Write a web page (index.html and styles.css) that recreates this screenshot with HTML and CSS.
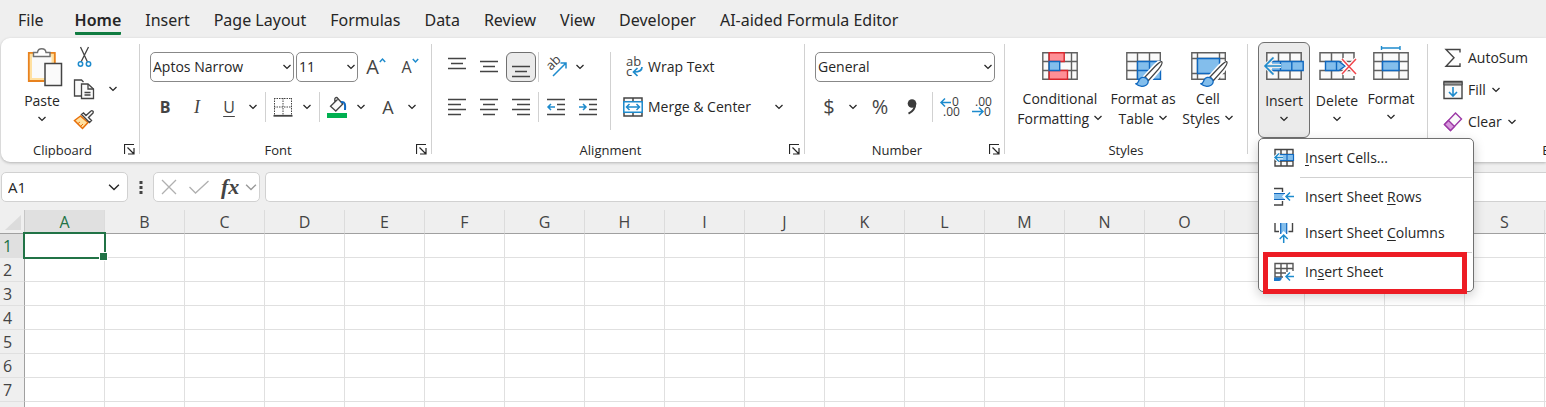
FILE: index.html
```html
<!DOCTYPE html>
<html lang="en">
<head>
  <meta charset="UTF-8" />
  <meta name="viewport" content="width=device-width, initial-scale=1" />
  <title>Excel - Insert Sheet</title>
  <link rel="stylesheet" href="styles.css">
</head>
<body>
  <!-- Shared icons -->
  <svg class="defs" width="0" height="0">
    <symbol id="chevron" viewBox="0 0 10 6"><path d="M1.500 1l3.500 3.400L8.500 1" fill="none" stroke="currentColor" /></symbol>
    <symbol id="launcher" viewBox="0 0 11 11"><path d="M10 .5H.5V10M3.500 3.500l6 6M10 4v6H4" fill="none" stroke="currentColor" stroke-width="1.200" /></symbol>
    <symbol id="brush" viewBox="0 0 28 26">
      <path d="M26.500 1c1 1-.5 4.500-3 8L14 20l-4-4L20 5c3-3 5.500-5 6.500-4z" fill="#fff" stroke="#fff" stroke-width="4" />
      <path d="M26.800 .8c.8 1-.7 4-3.300 7.400L13.500 19.500 10 16 20 5.500c3.500-3.400 6-5.500 6.800-4.700z" fill="#fff" stroke="#444" stroke-width="1.300" />
      <path d="M.8 22.800c2.500 0 2.400-2 3.300-3.800 1.300-2.600 4.500-3.600 7.300-1.600 2.600 2 2.300 5.300-.4 6.800-3.200 1.700-7.400 1-10.200-1.400z" fill="#83beec" stroke="#1068bf" stroke-width="1.300" />
    </symbol>
  </svg>

  <nav class="tabs">
    <button class="file">File</button>
    <button class="active">Home</button>
    <button>Insert</button>
    <button>Page Layout</button>
    <button>Formulas</button>
    <button>Data</button>
    <button>Review</button>
    <button>View</button>
    <button>Developer</button>
    <button>AI-aided Formula Editor</button>
  </nav>

  <div class="ribbon">
    <section class="group clipboard">
      <div class="body">
        <button class="big split">
          <svg width="40" height="40" viewBox="0 0 40 40">
            <path d="M8 8.500h23.500V34H8z" fill="#fafafa" stroke="#ffe0a0" stroke-width="4" />
            <path d="M22 35H6.800V6.800h26V17" fill="none" stroke="#e8821e" stroke-width="1.800" />
            <path d="M11.500 10.500V6.500h4c.5-5 8-5 8.500 0h4v4z" fill="#fff" stroke="#707070" stroke-width="1.400" />
            <path d="M23 17.500h16.500v22H23z" fill="#fafafa" stroke="#444" stroke-width="1.500" />
          </svg>
          <span class="label">Paste</span>
          <svg class="chevron"><use href="#chevron" /></svg>
        </button>
        <div class="stack narrow">
          <button class="tool" aria-label="Cut">
            <svg width="20" height="22" viewBox="0 0 20 22">
              <path d="M6.500 1l7 15M14.500 1L7 16" fill="none" stroke="#444" stroke-width="1.300" />
              <g fill="none" stroke="#1e8bcd" stroke-width="1.500"><circle cx="6.500" cy="18" r="2.200" /><circle cx="14.500" cy="18" r="2.200" /></g>
            </svg>
          </button>
          <div class="pair">
            <button class="tool" aria-label="Copy">
              <svg width="22" height="22" viewBox="0 0 22 22" fill="#fafafa" stroke="#444" stroke-width="1.300">
                <path d="M8 18H1.500V2h7l2 2" /><path d="M8.500 6H15l5.500 5v9.500h-12z" /><path d="M15 6v5h5.500M11.500 14.500h6M11.500 17h6" fill="none" />
              </svg>
            </button>
            <button class="chev" aria-label="Copy options"><svg class="chevron"><use href="#chevron" /></svg></button>
          </div>
          <button class="tool" aria-label="Format Painter">
            <svg width="22" height="20" viewBox="0 0 22 20">
              <path d="M7.500 6L1.500 10.500l8 8 5.500-6z" fill="#ffe0a0" stroke="#e8700a" stroke-width="1.500" />
              <path d="M5 13.500l2-1.500M8 16l2-2" stroke="#e8700a" fill="none" />
              <path d="M8.500 4.500l8 8 2-2-3-3 4.500-4.500c1-1.500-1-3-2-2L13 5.500l-2.500-2.500z" fill="#fff" stroke="#444" stroke-width="1.400" />
            </svg>
          </button>
        </div>
      </div>
      <footer><span>Clipboard</span><button aria-label="Clipboard settings"><svg class="launcher"><use href="#launcher" /></svg></button></footer>
    </section>
    <div class="divider"></div>

    <section class="group font">
      <div class="body rows">
        <div class="row combos">
          <label class="combo wide"><select aria-label="Font name"><option>Aptos Narrow</option></select><svg class="chevron"><use href="#chevron" /></svg></label>
          <label class="combo size"><select aria-label="Font size"><option>11</option></select><svg class="chevron"><use href="#chevron" /></svg></label>
          <button class="tool letter grow" aria-label="Increase font size">A<svg width="7" height="5" viewBox="0 0 7 5"><path d="M.8 4l2.700-3 2.700 3" fill="none" stroke="#1e8bcd" stroke-width="1.500" /></svg></button>
          <button class="tool letter shrink" aria-label="Decrease font size">A<svg width="7" height="5" viewBox="0 0 7 5"><path d="M.8 1l2.700 3 2.700-3" fill="none" stroke="#1e8bcd" stroke-width="1.500" /></svg></button>
        </div>
        <div class="row">
          <button class="tool bold">B</button>
          <button class="tool italic">I</button>
          <button class="tool underline">U</button>
          <button class="chev" aria-label="Underline options"><svg class="chevron"><use href="#chevron" /></svg></button>
          <div class="sep"></div>
          <button class="tool" aria-label="Borders">
            <svg width="20" height="20" viewBox="0 0 20 20" fill="none" stroke="#444">
              <path d="M1 1.500h18M1 10h18M1.500 1v17M10 1v17M18.500 1v17" stroke-dasharray="1.500 1" /><path d="M.5 18.800h19" stroke-width="1.800" />
            </svg>
          </button>
          <button class="chev" aria-label="Border options"><svg class="chevron"><use href="#chevron" /></svg></button>
          <div class="sep"></div>
          <button class="tool" aria-label="Fill color">
            <svg width="20" height="22" viewBox="0 0 20 22">
              <path d="M10.500 3.500L3.500 10.300l5.300 4.700 7-7-5-5.500c-1-1.800-3.300-.8-3 1V7" fill="#fafafa" stroke="#444" stroke-width="1.300" />
              <path d="M14 6c4-.5 4.500 2 4 8" fill="none" stroke="#1068bf" stroke-width="2" />
              <path d="M0 17h20v5H0z" fill="#00b050" />
            </svg>
          </button>
          <button class="chev" aria-label="Fill color options"><svg class="chevron"><use href="#chevron" /></svg></button>
          <button class="tool letter spaced" aria-label="Font color">A</button>
          <button class="chev" aria-label="Font color options"><svg class="chevron"><use href="#chevron" /></svg></button>
        </div>
      </div>
      <footer><span>Font</span><button aria-label="Font settings"><svg class="launcher"><use href="#launcher" /></svg></button></footer>
    </section>
    <div class="divider"></div>

    <section class="group alignment">
      <div class="body rows">
        <div class="columns">
          <div class="rows">
            <div class="row">
              <button class="tool" aria-label="Top align"><svg class="lines" viewBox="0 0 18 20"><path d="M0 1.500h18M3 6.500h12M0 11.500h18" /></svg></button>
              <button class="tool" aria-label="Middle align"><svg class="lines" viewBox="0 0 18 20"><path d="M0 4.500h18M3 9.500h12M0 14.500h18" /></svg></button>
              <button class="tool pressed" aria-label="Bottom align"><svg class="lines" viewBox="0 0 18 20"><path d="M0 9.500h18M3 14.500h12M0 19.500h18" /></svg></button>
              <div class="sep tight"></div>
              <button class="tool" aria-label="Orientation">
                <svg width="22" height="22" viewBox="0 0 22 22">
                  <text transform="translate(6 15) rotate(-45)" font-size="13" fill="#444">ab</text>
                  <path d="M8 20L20.500 7.500M15.500 7h5.500v5.500" fill="none" stroke="#1e8bcd" stroke-width="1.500" />
                </svg>
              </button>
              <button class="chev" aria-label="Orientation options"><svg class="chevron"><use href="#chevron" /></svg></button>
            </div>
            <div class="row">
              <button class="tool" aria-label="Align left"><svg class="lines" viewBox="0 0 18 20"><path d="M0 2.500h18M0 7.500h13M0 12.500h18M0 17.500h13" /></svg></button>
              <button class="tool" aria-label="Center"><svg class="lines" viewBox="0 0 18 20"><path d="M0 2.500h18M3 7.500h12M0 12.500h18M3 17.500h12" /></svg></button>
              <button class="tool" aria-label="Align right"><svg class="lines" viewBox="0 0 18 20"><path d="M0 2.500h18M5 7.500h13M0 12.500h18M5 17.500h13" /></svg></button>
              <div class="sep tight"></div>
              <button class="tool" aria-label="Decrease indent"><svg class="lines" viewBox="0 0 18 20"><path d="M0 2.500h18M10 7.500h8M10 12.500h8M0 17.500h18" /><path class="blue" d="M8 10H1M4 7l-3 3 3 3" /></svg></button>
              <button class="tool" aria-label="Increase indent"><svg class="lines" viewBox="0 0 18 20"><path d="M0 2.500h18M10 7.500h8M10 12.500h8M0 17.500h18" /><path class="blue" d="M0 10h7M4 7l3 3-3 3" /></svg></button>
            </div>
          </div>
          <div class="sep tall"></div>
          <div class="rows">
            <button class="text-tool">
              <svg width="20" height="22" viewBox="0 0 20 22">
                <text x="3" y="10" font-size="13" fill="#444">ab</text><text x="3" y="20" font-size="13" fill="#444">c</text>
                <path d="M19 11c0 4-3 5-8 5M14.500 12l-4 4 4 4" fill="none" stroke="#1e8bcd" stroke-width="1.700" />
              </svg>
              Wrap Text
            </button>
            <div class="row">
              <button class="text-tool merge">
                <svg width="20" height="20" viewBox="0 0 20 20">
                  <path d="M1 1h18v18H1zM10 1v18" fill="#fafafa" stroke="#444" stroke-width="1.500" />
                  <path d="M.8 4.800h18.400v10.400H.8z" fill="#fff" stroke="#1e8bcd" stroke-width="1.500" />
                  <path d="M3.500 10h13M6.500 7l-3 3 3 3M13.500 7l3 3-3 3" fill="none" stroke="#1e8bcd" stroke-width="1.500" />
                </svg>
                Merge &amp; Center
              </button>
              <button class="chev" aria-label="Merge options"><svg class="chevron"><use href="#chevron" /></svg></button>
            </div>
          </div>
        </div>
      </div>
      <footer><span>Alignment</span><button aria-label="Alignment settings"><svg class="launcher"><use href="#launcher" /></svg></button></footer>
    </section>
    <div class="divider"></div>

    <section class="group number">
      <div class="body rows">
        <div class="row combos">
          <label class="combo format"><select aria-label="Number format"><option>General</option></select><svg class="chevron"><use href="#chevron" /></svg></label>
        </div>
        <div class="row">
          <button class="tool currency">$</button>
          <button class="chev" aria-label="Currency options"><svg class="chevron"><use href="#chevron" /></svg></button>
          <button class="tool percent spaced">%</button>
          <button class="tool" aria-label="Comma style">
            <svg width="12" height="16" viewBox="0 0 12 16"><circle cx="6" cy="4.500" r="4.300" fill="#3b3b3b" /><path d="M9.300 4.500c0 5-2.500 8-6.800 10.200" fill="none" stroke="#3b3b3b" stroke-width="2" /></svg>
          </button>
          <div class="sep"></div>
          <button class="tool" aria-label="Increase decimal">
            <svg width="20" height="22" viewBox="0 0 20 22" font-size="12" fill="#3b3b3b">
              <text x="12" y="10">0</text><text x="3" y="20">.00</text>
              <path d="M11 6.500H1M5 2.500l-4 4 4 4" fill="none" stroke="#1e8bcd" stroke-width="1.500" />
            </svg>
          </button>
          <button class="tool" aria-label="Decrease decimal">
            <svg width="20" height="22" viewBox="0 0 20 22" font-size="12" fill="#3b3b3b">
              <text x="3" y="10">.00</text><text x="12" y="20">0</text>
              <path d="M0 15.500h11M7 11.500l4 4-4 4" fill="none" stroke="#1e8bcd" stroke-width="1.500" />
            </svg>
          </button>
        </div>
      </div>
      <footer><span>Number</span><button aria-label="Number settings"><svg class="launcher"><use href="#launcher" /></svg></button></footer>
    </section>
    <div class="divider"></div>

    <section class="group styles">
      <div class="body">
        <button class="big w-cond">
          <svg width="40" height="40" viewBox="0 0 40 40">
            <path d="M2.800 6.800h34.400v26.400H2.800zM2.800 15.500h34.400M2.800 24.500h34.400M9 6.800v26.400M31.500 6.800v26.400" fill="#fafafa" stroke="#606060" stroke-width="1.400" />
            <path d="M9.200 6.800h15v8.700h-15zM9.200 24.500H27.500v8.700H9.200z" fill="#ff8f96" stroke="#d8272d" stroke-width="1.400" />
            <path d="M9.200 15.500h10.500v9H9.200z" fill="#83beec" stroke="#1068bf" stroke-width="1.400" />
          </svg>
          <span class="label">Conditional<br>Formatting <svg class="chevron"><use href="#chevron" /></svg></span>
        </button>
        <button class="big w-table">
          <svg width="40" height="42" viewBox="0 0 40 42">
            <path d="M3.800 6.800h33.500v26.400H3.800zM3.800 15.500h33.500M3.800 24.500h33.500M14.500 6.800v26.400M26.500 6.800v26.400" fill="#fafafa" stroke="#606060" stroke-width="1.400" />
            <path d="M14.500 15.500h23v17.700h-23zM14.500 24.500h23M26.500 15.500v17.700" fill="#83beec" stroke="#1068bf" stroke-width="1.400" />
            <use href="#brush" x="12" y="15" width="28" height="26" />
          </svg>
          <span class="label">Format as<br>Table <svg class="chevron"><use href="#chevron" /></svg></span>
        </button>
        <button class="big w-cell">
          <svg width="40" height="42" viewBox="0 0 40 42">
            <path d="M3.800 6.800h33.500v26.400H3.800zM3.800 12.500h33.500M3.800 27.500h33.500M9.500 6.800v26.400M31.500 6.800v26.400" fill="#fafafa" stroke="#606060" stroke-width="1.400" />
            <path d="M9.500 12.500h22v15h-22z" fill="#83beec" stroke="#1068bf" stroke-width="1.400" />
            <use href="#brush" x="12" y="15" width="28" height="26" />
          </svg>
          <span class="label">Cell<br>Styles <svg class="chevron"><use href="#chevron" /></svg></span>
        </button>
      </div>
      <footer class="plain"><span>Styles</span></footer>
    </section>
    <div class="divider"></div>

    <section class="group cells">
      <div class="body">
        <div class="dropdown">
          <button class="big split pressed" aria-expanded="true">
            <svg width="40" height="40" viewBox="0 0 40 40">
              <path d="M2.800 6.800h34.400v26.400H2.800zM2.800 15.500h34.400M2.800 24.500h34.400M14.500 6.800v26.400M26 6.800v26.400" fill="#fafafa" stroke="#606060" stroke-width="1.500" />
              <path d="M8 15.500h31.200v9H8M16.500 15.500v9M27.800 15.500v9" fill="#83beec" stroke="#1068bf" stroke-width="1.400" />
              <path d="M17 20H1.500M9.500 11.500L1 20l8.500 8.500" fill="none" stroke="#ebebeb" stroke-width="4" />
              <path d="M17 20H1.500M9.500 11.500L1 20l8.500 8.500" fill="none" stroke="#1e8bcd" stroke-width="1.600" />
            </svg>
            <span class="label">Insert</span>
            <svg class="chevron"><use href="#chevron" /></svg>
          </button>
          <div class="menu" role="menu">
            <button role="menuitem">
              <svg width="20" height="20" viewBox="0 0 20 20">
                <path d="M1 1.500h18v16.500H1zM1 6.500h18M1 13h18M7 1.500V18M13 1.500V18" fill="#fafafa" stroke="#444" stroke-width="1.400" />
                <path d="M5 6.500h14.500v6H5zM13 6.500v6" fill="#83beec" stroke="#1068bf" stroke-width="1.200" />
                <path d="M9 9.500H1M5 5.500l-4 4 4 4" fill="none" stroke="#fff" stroke-width="3.500" />
                <path d="M9 9.500H1M5 5.500l-4 4 4 4" fill="none" stroke="#1e8bcd" stroke-width="1.500" />
              </svg>
              <span><u>I</u>nsert Cells...</span>
            </button>
            <hr>
            <button role="menuitem">
              <svg width="20" height="20" viewBox="0 0 20 20">
                <path d="M0 1.500h8.500v3.500M0 18h8.500v-4" fill="none" stroke="#444" stroke-width="1.400" />
                <path d="M0 6.500h11l-3 3 3 3H0z" fill="#83beec" />
                <path d="M0 6.500h11M0 12.500h11" stroke="#1068bf" stroke-width="1.200" />
                <path d="M20 9.500h-8M16 5.500l-4 4 4 4" fill="none" stroke="#1e8bcd" stroke-width="1.500" />
              </svg>
              <span>Insert Sheet <u>R</u>ows</span>
            </button>
            <button role="menuitem">
              <svg width="20" height="20" viewBox="0 0 20 20">
                <path d="M1 0v8.500h4M18.500 0v8.500h-4" fill="none" stroke="#444" stroke-width="1.400" />
                <path d="M6.700 0v11l3-3 3 3V0z" fill="#83beec" />
                <path d="M6.700 0v11M12.700 0v11" stroke="#1068bf" stroke-width="1.200" />
                <path d="M9.700 20v-8M5.700 16l4-4 4 4" fill="none" stroke="#1e8bcd" stroke-width="1.500" />
              </svg>
              <span>Insert Sheet <u>C</u>olumns</span>
            </button>
            <hr>
            <button role="menuitem">
              <svg width="20" height="20" viewBox="0 0 20 20">
                <path d="M19 9V1.500H1V15h8M1 6.500h18M1 11h11M7 1.500V15M13 1.500V10" fill="none" stroke="#555" stroke-width="1.400" />
                <path d="M0 15.500h8c-.5 2.500-1.500 3.500-3 3.500H0z" fill="#1e78c8" />
                <path d="M20 14.500h-8M16 10.500l-4 4 4 4" fill="none" stroke="#1e8bcd" stroke-width="1.500" />
              </svg>
              <span>In<u>s</u>ert Sheet</span>
            </button>
            <div class="highlight"></div>
          </div>
        </div>
        <button class="big split">
          <svg width="40" height="40" viewBox="0 0 40 40">
            <path d="M37 15.500V6.800H3v8.700h34M14.500 6.800v8.700M26 6.800v8.700M37 30v3.200H3v-8.700h34M14.500 24.500v8.700M26 24.500v8.700" fill="#fafafa" stroke="#606060" stroke-width="1.500" />
            <path d="M8.500 15.500H22l6 4.500-6 4.500H8.500zM19.500 15.500v9" fill="#83beec" stroke="#1068bf" stroke-width="1.400" />
            <path d="M25 13l14 15M39 13L25 28" stroke="#fff" stroke-width="4" />
            <path d="M25 13l14 15M39 13L25 28" stroke="#f0464c" stroke-width="1.500" />
          </svg>
          <span class="label">Delete</span>
          <svg class="chevron"><use href="#chevron" /></svg>
        </button>
        <button class="big">
          <svg width="40" height="40" viewBox="0 0 40 40">
            <path d="M2.800 6.800h34.400v26.400H2.800zM2.800 15.500h34.400M2.800 24.500h34.400M11.500 6.800v26.400M28 6.800v26.400" fill="#fafafa" stroke="#606060" stroke-width="1.400" />
            <path d="M11.500 15.500H28v9H11.500z" fill="#83beec" stroke="#1068bf" stroke-width="1.500" />
            <path d="M10.500 2h18.500M10.500 0v4M29 0v4" stroke="#1e8bcd" stroke-width="1.400" />
          </svg>
          <span class="label">Format</span>
          <svg class="chevron"><use href="#chevron" /></svg>
        </button>
      </div>
      <footer class="plain"><span>Cells</span></footer>
    </section>
    <div class="divider"></div>

    <section class="group editing">
      <div class="body">
        <div class="stack">
          <button class="text-tool">
            <svg width="20" height="20" viewBox="0 0 20 20"><path d="M17 4.500V1.500H3L11 9.800 3 18.200h14v-3" fill="none" stroke="#444" stroke-width="1.400" /></svg>
            AutoSum
          </button>
          <button class="text-tool">
            <svg width="20" height="20" viewBox="0 0 20 20">
              <path d="M1 1.500h18v17H1z" fill="#fafafa" stroke="#444" stroke-width="1.400" /><path d="M1 2h18v3H1z" fill="#999" stroke="#444" />
              <path d="M10 7v9M6 12l4 4 4-4" fill="none" stroke="#1e8bcd" stroke-width="1.600" />
            </svg>
            Fill <svg class="chevron"><use href="#chevron" /></svg>
          </button>
          <button class="text-tool">
            <svg width="20" height="20" viewBox="0 0 20 20">
              <path d="M12.500 1l6 6L7.500 18.500l-6-6z" fill="#fafafa" stroke="#9b37a5" stroke-width="1.400" />
              <path d="M5.500 8.500l6 6-4 4-6-6z" fill="#d898dd" stroke="#9b37a5" stroke-width="1.400" />
            </svg>
            Clear <svg class="chevron"><use href="#chevron" /></svg>
          </button>
        </div>
      </div>
      <footer class="plain"><span>Editing</span></footer>
    </section>
  </div>

  <div class="formula-bar">
    <label class="name-box"><input type="text" value="A1" aria-label="Name box"><svg class="chevron large"><use href="#chevron" /></svg></label>
    <svg class="dots" width="4" height="14" viewBox="0 0 4 14"><path d="M.5 1h3v3h-3zM.5 6h3v3h-3zM.5 11h3v3h-3z" fill="#444" /></svg>
    <div class="fx-box">
      <button aria-label="Cancel"><svg width="16" height="16" viewBox="0 0 16 16"><path d="M1 1l14 14M15 1L1 15" stroke="#b0b0b0" stroke-width="1.300" /></svg></button>
      <button aria-label="Enter"><svg width="20" height="14" viewBox="0 0 20 14"><path d="M.5 7l6 6L19.500 1" fill="none" stroke="#b0b0b0" stroke-width="1.300" /></svg></button>
      <button class="fx">fx</button>
      <button aria-label="Function options"><svg class="chevron large muted"><use href="#chevron" /></svg></button>
    </div>
    <input class="formula" type="text" aria-label="Formula">
  </div>

  <table class="sheet">
    <thead><tr id="columns"><th class="corner"><svg width="16" height="15" viewBox="0 0 16 15"><path d="M16 0v15H0z" fill="#dcdcdc" /></svg></th></tr></thead>
    <tbody id="rows"></tbody>
  </table>

  <script>
    const letters = "ABCDEFGHIJKLMNOPQRST".split("");
    const rowCount = 8;

    document.getElementById("columns").innerHTML += letters
      .map((letter) => `<th class="${letter === "A" ? "current" : ""}">${letter}</th>`)
      .join("");

    let html = "";
    for (let row = 1; row <= rowCount; row++) {
      html += `<tr><th class="${row === 1 ? "current" : ""}">${row}</th>`;
      html += letters.map((letter) => `<td class="${row === 1 && letter === "A" ? "selected" : ""}"></td>`).join("");
      html += "</tr>";
    }
    document.getElementById("rows").innerHTML = html;
  </script>
</body>
</html>
```
FILE: styles.css
```css
* {
  box-sizing: border-box;
}
body {
  margin: 0;
  background-color: #efefef;
  color: #262626;
  font-family: "Open Sans", "Noto Sans", sans-serif;
  font-size: 14px;
  line-height: 20px;
  height: 100vh;
  overflow: hidden;
}
button, input, select {
  font: inherit;
  color: inherit;
}
button {
  margin: 0;
  padding: 0;
  border: none;
  background: none;
  white-space: nowrap;
}
svg {
  flex: none;
  overflow: visible;
}
.defs {
  display: block;
}
.chevron {
  width: 10px;
  height: 6px;
  stroke-width: 1.3px;
}
.chevron.large {
  width: 14px;
  height: 9px;
  stroke-width: 1px;
}
.muted {
  color: #999;
}
.launcher {
  display: block;
  width: 11px;
  height: 11px;
}

/* Tabs */
.tabs {
  display: flex;
  gap: 24px;
  height: 38px;
  padding: 5px 18px 3px;
  font-family: "Noto Sans", sans-serif;
  font-size: 16px;
}
.tabs button {
  padding-top: 3px;
  border-bottom: 3px solid transparent;
}
.tabs .file {
  margin-right: 7px;
}
.tabs .active {
  font-weight: 600;
  border-color: #107c41;
  border-radius: 1px;
}

/* Ribbon */
.ribbon {
  display: flex;
  height: 124px;
  margin-left: 1px;
  background-color: #fff;
  border-radius: 9px 0 0 9px;
  box-shadow: 0 1px 3px rgba(0, 0, 0, 0.25);
}
.divider {
  flex: none;
  width: 1px;
  margin: 6px 0 8px;
  background-color: #d1d1d1;
}
.group {
  flex: none;
  display: flex;
  flex-direction: column;
  padding-top: 4px;
}
.clipboard { width: 138px; }
.font { width: 291px; }
.alignment { width: 372px; }
.number { width: 199px; }
.styles { width: 242px; }
.cells { width: 179px; }
.editing { width: 270px; }

.body {
  display: flex;
  height: 96px;
  padding: 0 9px;
}
.clipboard .body {
  padding-left: 15px;
}
.number .body {
  padding-left: 8px;
}
.cells .body {
  padding-left: 10px;
}
.editing .body {
  padding-left: 15px;
}
.group footer {
  display: flex;
  align-items: center;
  height: 23px;
  padding-right: 4px;
  font-size: 13px;
}
.group footer.plain {
  padding-right: 0;
}
.group footer span {
  flex: 1;
  text-align: center;
}
.rows {
  display: flex;
  flex-direction: column;
  align-items: flex-start;
  gap: 10px;
}
.body.rows {
  padding-top: 10px;
}
.row, .pair, .columns {
  display: flex;
  align-items: center;
}
.columns {
  align-items: flex-start;
}
.stack {
  display: flex;
  flex-direction: column;
  align-items: flex-start;
  gap: 1px;
}
.stack > * {
  height: 31px;
}
.pair .tool {
  height: 31px;
}
.tool {
  display: flex;
  align-items: center;
  justify-content: center;
  width: 32px;
  height: 30px;
}
.chev {
  display: flex;
  align-items: center;
  justify-content: center;
  width: 16px;
  height: 30px;
}
.narrow .chev {
  margin-left: 5px;
}
.pressed {
  background-color: #ebebeb;
  border: 1px solid #707070;
  border-radius: 6px;
}
.tool.pressed {
  width: 30px;
  margin: 0 1px;
}
.sep {
  flex: none;
  width: 1px;
  height: 30px;
  margin: 0 1px 0 4px;
  background-color: #d1d1d1;
}
.sep.tight {
  margin: 0 1px;
}
.sep.tall {
  height: 78px;
  margin: 0 12px 0 6px;
}
.spaced {
  margin-left: 3px;
}

.combos {
  gap: 2px;
  padding-left: 1px;
}
.number .combos {
  padding-left: 2px;
}
.combo {
  display: grid;
  align-items: center;
}
.combo > * {
  grid-area: 1 / 1;
}
.combo .chevron {
  justify-self: end;
  margin-right: 2px;
  pointer-events: none;
}
.combo select {
  appearance: none;
  width: 100%;
  height: 30px;
  padding: 0 2px;
  background-color: #fff;
  border: 1px solid #888;
  border-radius: 5px;
}
.combo.wide { width: 144px; }
.combo.size { width: 62px; }
.combo.format { width: 180px; }

.bold, .italic, .underline, .letter, .currency, .percent {
  color: #444;
}
.bold {
  font-size: 16px;
  font-weight: 700;
}
.italic {
  font-family: "Liberation Serif", serif;
  font-size: 18px;
  font-style: italic;
}
.underline {
  font-size: 16px;
  text-decoration: underline;
  text-underline-offset: 3px;
}
.letter {
  font-size: 18px;
}
.letter svg {
  align-self: flex-start;
  margin-top: 6px;
}
.grow {
  font-size: 20px;
}
.shrink {
  font-size: 16px;
}
.currency, .percent {
  font-size: 20px;
}
.lines {
  width: 18px;
  height: 20px;
  fill: none;
  stroke: #444;
  stroke-width: 1.5px;
}
.lines .blue {
  stroke: #1e8bcd;
}
.text-tool {
  display: flex;
  align-items: center;
  gap: 5px;
  height: 30px;
}
.stack .text-tool {
  height: 31px;
}
.merge {
  width: 148px;
}

.big {
  display: flex;
  flex-direction: column;
  align-items: center;
  width: 54px;
  height: 96px;
  padding-top: 4px;
}
.big > svg:first-child {
  margin-bottom: 3px;
}
.big > svg[height="42"] {
  margin-bottom: 1px;
}
.big .label {
  line-height: 20px;
}
.big > .chevron {
  margin-top: 5px;
}
.big.split .label {
  margin-top: 2px;
}
.big .label .chevron {
  vertical-align: 3px;
}
.clipboard .big, .big.pressed {
  width: 52px;
}
.big.pressed {
  padding-top: 3px;
}
.big.w-cond { width: 92px; }
.big.w-table { width: 74px; }
.big.w-cell { width: 56px; }

/* Insert menu */
.dropdown {
  position: relative;
}
.menu {
  position: absolute;
  z-index: 2;
  top: 96px;
  left: 0;
  width: 216px;
  padding: 1px 0;
  background-color: #fff;
  border: 1px solid #707070;
  border-radius: 5px;
  box-shadow: 0 4px 12px rgba(0, 0, 0, 0.2);
}
.menu button {
  display: flex;
  align-items: center;
  gap: 11px;
  width: 100%;
  height: 36px;
  padding-left: 15px;
}
.menu u {
  text-underline-offset: 2px;
}
.menu hr {
  height: 1px;
  margin: 1px 1px 1px 41px;
  border: none;
  background-color: #d1d1d1;
}
.highlight {
  position: absolute;
  left: 4px;
  right: 6px;
  bottom: -3px;
  height: 42px;
  border: 5px solid #ed1c24;
}

/* Formula bar */
.formula-bar {
  display: flex;
  align-items: center;
  height: 48px;
  padding: 2px 0 0 1px;
}
.name-box, .fx-box, .formula {
  height: 30px;
  background-color: #fff;
  border: 1px solid #d1d1d1;
  border-radius: 5px;
}
.name-box {
  display: flex;
  align-items: center;
  width: 127px;
  padding: 0 6px;
}
.name-box input {
  flex: 1;
  min-width: 0;
  padding: 0;
  border: none;
  outline: none;
  font-size: 15px;
}
.dots {
  margin: 0 10px 0 11px;
}
.fx-box {
  display: flex;
  align-items: center;
  gap: 12px;
  width: 107px;
  padding: 0 1px 0 7px;
}
.fx-box button {
  display: flex;
}
.fx {
  font-family: "Liberation Serif", serif;
  font-size: 22px;
  font-style: italic;
  font-weight: 700;
  color: #444;
}
.fx-box .fx + button {
  margin-left: -7px;
}
.formula {
  flex: 1;
  margin-left: 5px;
  border-right: none;
  border-radius: 5px 0 0 5px;
}

/* Sheet */
.sheet {
  width: 1625px;
  table-layout: fixed;
  border-collapse: separate;
  border-spacing: 0;
  background-color: #fff;
  font-size: 16px;
}
.sheet th, .sheet td {
  width: 80px;
  height: 24px;
  padding: 0;
  border-right: 1px solid #e0e0e0;
  border-bottom: 1px solid #e0e0e0;
  line-height: 20px;
}
.sheet th {
  background-color: #efefef;
  color: #444;
  font-weight: 400;
}
.sheet thead th {
  border-right-color: #dcdcdc;
  border-bottom-color: #a0a0a0;
}
.sheet th:first-child {
  width: 25px;
  padding-right: 9px;
  border-right-color: #a0a0a0;
}
.sheet .corner svg {
  display: block;
  margin: 2px 0 0 5px;
}
.sheet thead th.corner {
  border-right-color: #c6c6c6;
}
.sheet th.current {
  background-color: #e0e0e0;
  color: #217346;
}
.selected {
  position: relative;
}
.selected::before {
  content: "";
  position: absolute;
  inset: -2px;
  border: 2px solid #217346;
}
.selected::after {
  content: "";
  position: absolute;
  right: -4px;
  bottom: -4px;
  width: 7px;
  height: 7px;
  background-color: #217346;
  border: 1px solid #fff;
}
```
